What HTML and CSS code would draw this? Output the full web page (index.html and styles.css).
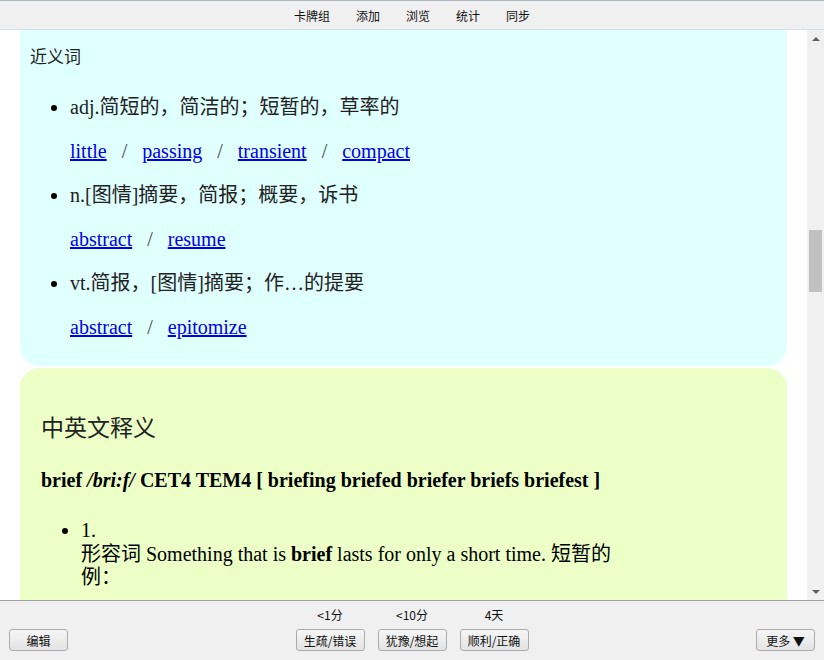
FILE: index.html
```html
<!DOCTYPE html>
<html lang="zh-CN">
<head>
    <meta charset="UTF-8">
    <title>brief</title>
    <link rel="stylesheet" href="styles.css">
</head>
<body>
    <div class="topbar">
        <span>卡牌组</span>
        <span>添加</span>
        <span>浏览</span>
        <span>统计</span>
        <span>同步</span>
    </div>

    <div class="middle">
        <div class="viewport">
            <div class="scroller">
                <div class="card synonyms">
                    <div class="card-title">近义词</div>
                    <ul>
                        <li>
                            <div class="def">adj.简短的，简洁的；短暂的，草率的</div>
                            <div class="links"><a href="#">little</a><span class="sep">/</span><a href="#">passing</a><span class="sep">/</span><a href="#">transient</a><span class="sep">/</span><a href="#">compact</a></div>
                        </li>
                        <li>
                            <div class="def">n.[图情]摘要，简报；概要，诉书</div>
                            <div class="links"><a href="#">abstract</a><span class="sep">/</span><a href="#">resume</a></div>
                        </li>
                        <li>
                            <div class="def">vt.简报，[图情]摘要；作…的提要</div>
                            <div class="links"><a href="#">abstract</a><span class="sep">/</span><a href="#">epitomize</a></div>
                        </li>
                    </ul>
                </div>

                <div class="card meanings">
                    <div class="heading">中英文释义</div>
                    <div class="headword">brief <i>/bri:f/</i> CET4 TEM4 [ briefing briefed briefer briefs briefest ]</div>
                    <ul>
                        <li>1.<br>形容词 Something that is <b>brief</b> lasts for only a short time. 短暂的<br>例：</li>
                    </ul>
                </div>
            </div>
        </div>
        <div class="scrollbar">
            <div class="arrow up"></div>
            <div class="track"><div class="thumb"></div></div>
            <div class="arrow down"></div>
        </div>
    </div>

    <div class="bottombar">
        <button class="btn">编辑</button>
        <div class="answers">
            <div class="answer"><span class="due">&lt;1分</span><button class="btn">生疏/错误</button></div>
            <div class="answer"><span class="due">&lt;10分</span><button class="btn">犹豫/想起</button></div>
            <div class="answer"><span class="due">4天</span><button class="btn">顺利/正确</button></div>
        </div>
        <button class="btn">更多 ▼</button>
    </div>
</body>
</html>
```

FILE: styles.css
```css
html, body {
    margin: 0;
    height: 100%;
}
body {
    display: flex;
    flex-direction: column;
    background: #f0f0f0;
    font-family: "Noto Sans CJK SC", sans-serif;
    font-size: 12px;
    color: #111;
    overflow: hidden;
}

/* top menu */
.topbar {
    height: 28px;
    border-top: 1px solid #aeb6c2;
    border-bottom: 1px solid #d3e0e8;
    display: flex;
    justify-content: center;
    align-items: center;
    gap: 26px;
    background: #f0f0f0;
}

/* card area + scrollbar */
.middle {
    flex: 1;
    display: flex;
    min-height: 0;
    background: #fff;
}
.viewport {
    flex: 1;
    overflow: hidden;
}
.scroller {
    margin-top: -20px;
    font-family: "Liberation Serif", "Noto Sans CJK SC", serif;
    color: #000;
}
.card {
    margin: 0 20px;
    border-radius: 20px;
}
.card ul {
    padding-left: 40px;
}
.synonyms {
    background: #e0ffff;
    padding: 34px 10px 7px;
}
.card-title {
    font-family: "Noto Sans CJK SC", sans-serif;
    font-size: 17px;
    line-height: 24px;
    color: #222;
}
.synonyms ul {
    margin: 27px 0 0;
}
.synonyms li {
    font-size: 20px;
}
.def, .links {
    line-height: 24px;
    margin-bottom: 20px;
}
.def {
    color: #222;
}
.links a {
    color: #0000ee;
}
.sep {
    margin: 0 15px;
    color: #444;
}

.meanings {
    margin-top: 2px;
    background: #ebffc6;
    padding: 43px 21px 200px;
}
.heading {
    font-family: "Noto Sans CJK SC", sans-serif;
    font-size: 23px;
    line-height: 30px;
    color: #222;
}
.headword {
    margin-top: 27px;
    font-size: 20px;
    font-weight: bold;
    line-height: 24px;
}
.meanings ul {
    margin: 27px 0 0;
    font-size: 20px;
    line-height: 23.5px;
}

.scrollbar {
    width: 17px;
    display: flex;
    flex-direction: column;
    background: #f0f0f0;
}
.arrow {
    height: 17px;
    display: flex;
    justify-content: center;
    align-items: center;
}
.arrow::before {
    content: "";
    border-left: 4px solid transparent;
    border-right: 4px solid transparent;
}
.arrow.up::before {
    border-bottom: 4px solid #606060;
}
.arrow.down::before {
    border-top: 4px solid #606060;
}
.track {
    flex: 1;
}
.thumb {
    margin: 183px 2px 0;
    height: 62px;
    background: #c0c0c0;
}

/* answer buttons */
.bottombar {
    height: 60px;
    border-top: 1px solid #a0a0a0;
    display: flex;
    justify-content: space-between;
    align-items: flex-end;
    padding: 0 9px 9px;
    box-sizing: border-box;
    background: #f0f0f0;
}
.answers {
    display: flex;
    gap: 13px;
}
.answer {
    display: flex;
    flex-direction: column;
    align-items: center;
    gap: 6px;
}
.due {
    line-height: 16px;
}
.btn {
    height: 22px;
    min-width: 59px;
    padding: 0 8px;
    white-space: nowrap;
    font-family: "Noto Sans CJK SC", sans-serif;
    font-size: 12px;
    color: #111;
    background: linear-gradient(#f6f6f6, #e3e3e3);
    border: 1px solid #acacac;
    border-radius: 3px;
}
.answer .btn {
    width: 69px;
    padding: 0;
}
```
